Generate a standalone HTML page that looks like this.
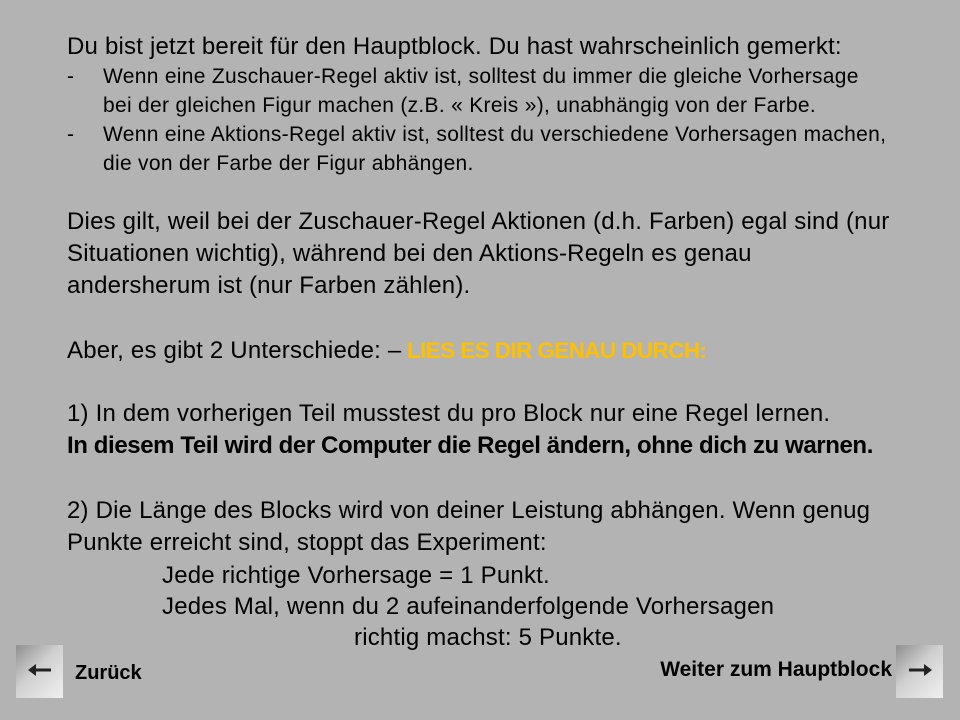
<!DOCTYPE html>
<html><head><meta charset="utf-8"><style>
body{margin:0;width:960px;height:720px;background:#b3b3b3;position:relative;overflow:hidden;font-family:"Liberation Sans",sans-serif;color:#000}
.l{position:absolute;white-space:nowrap;font-size:24px;letter-spacing:0.2px;line-height:30px}
.s{font-size:21px;letter-spacing:0.3px;line-height:26px}
.btn{position:absolute;width:47px;height:53px;background:linear-gradient(135deg,#8f8f8f 0%,#d0d0d0 45%,#f0f0f0 100%)}
.btn svg{position:absolute;left:12px;top:19px}
</style></head><body>
<div class="l" style="left:67px;top:32px">Du bist jetzt bereit für den Hauptblock. Du hast wahrscheinlich gemerkt:</div>
<div class="l s" style="left:67px;top:64px">-</div>
<div class="l s" style="left:103px;top:64px">Wenn eine Zuschauer-Regel aktiv ist, solltest du immer die gleiche Vorhersage</div>
<div class="l s" style="left:103px;top:93px">bei der gleichen Figur machen (z.B. « Kreis »), unabhängig von der Farbe.</div>
<div class="l s" style="left:67px;top:122px">-</div>
<div class="l s" style="left:103px;top:122px">Wenn eine Aktions-Regel aktiv ist, solltest du verschiedene Vorhersagen machen,</div>
<div class="l s" style="left:103px;top:151px">die von der Farbe der Figur abhängen.</div>
<div class="l" style="left:67px;top:207px">Dies gilt, weil bei der Zuschauer-Regel Aktionen (d.h. Farben) egal sind (nur</div>
<div class="l" style="left:67px;top:239px">Situationen wichtig), während bei den Aktions-Regeln es genau</div>
<div class="l" style="left:67px;top:271px">andersherum ist (nur Farben zählen).</div>
<div class="l" style="left:67px;top:336px">Aber, es gibt 2 Unterschiede: – </div>
<div class="l" style="left:407px;top:336px;color:#ffc000;font-weight:bold;font-size:22.5px;letter-spacing:-0.6px">LIES ES DIR GENAU DURCH:</div>
<div class="l" style="left:67px;top:399px">1) In dem vorherigen Teil musstest du pro Block nur eine Regel lernen.</div>
<div class="l" style="left:67px;top:431px;font-weight:bold;letter-spacing:-0.4px">In diesem Teil wird der Computer die Regel ändern, ohne dich zu warnen.</div>
<div class="l" style="left:67px;top:496px">2) Die Länge des Blocks wird von deiner Leistung abhängen. Wenn genug</div>
<div class="l" style="left:67px;top:528px">Punkte erreicht sind, stoppt das Experiment:</div>
<div class="l" style="left:162px;top:561px">Jede richtige Vorhersage = 1 Punkt.</div>
<div class="l" style="left:162px;top:592px">Jedes Mal, wenn du 2 aufeinanderfolgende Vorhersagen</div>
<div class="l" style="left:354px;top:623px">richtig machst: 5 Punkte.</div>
<div class="btn" style="left:16px;top:645px"><svg width="24" height="12" viewBox="0 0 24 12"><path d="M2 6H23" stroke="#222" stroke-width="3"/><path d="M0 6L8 0V12Z" fill="#222"/></svg></div>
<div class="btn" style="left:896px;top:645px"><svg width="24" height="12" viewBox="0 0 24 12"><path d="M1 6H22" stroke="#222" stroke-width="3"/><path d="M24 6L16 0V12Z" fill="#222"/></svg></div>
<div class="l" style="left:75px;top:660px;font-size:20px;font-weight:bold;letter-spacing:0px;line-height:26px">Zurück</div>
<div class="l" style="right:68px;top:657px;font-size:21px;font-weight:bold;letter-spacing:0px;line-height:26px">Weiter zum Hauptblock</div>
</body></html>
